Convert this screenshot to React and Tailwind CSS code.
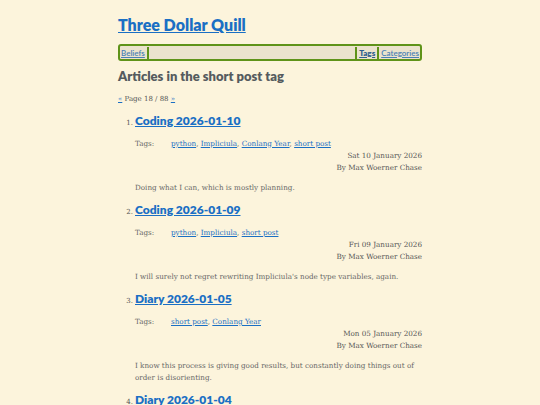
const sans = { fontFamily: 'Lato, "Noto Sans", sans-serif' }
const serif = { fontFamily: '"DejaVu Serif", "Liberation Serif", serif' }

const posts = [
  {
    title: "Coding 2026-01-10",
    tags: ["python", "Impliciula", "Conlang Year", "short post"],
    date: "Sat 10 January 2026",
    summary: "Doing what I can, which is mostly planning.",
  },
  {
    title: "Coding 2026-01-09",
    tags: ["python", "Impliciula", "short post"],
    date: "Fri 09 January 2026",
    summary: "I will surely not regret rewriting Impliciula's node type variables, again.",
  },
  {
    title: "Diary 2026-01-05",
    tags: ["short post", "Conlang Year"],
    date: "Mon 05 January 2026",
    summary: "I know this process is giving good results, but constantly doing things out of order is disorienting.",
  },
  {
    title: "Diary 2026-01-04",
    tags: ["short post"],
    date: "Sun 04 January 2026",
    summary: "",
  },
]

const Sep = () => <span className="mx-[2px] inline-block h-[12px] w-[2px] bg-[#5f9319]" />

const PostItem = ({ post, idx }) => (
  <li className="flex">
    <span className="w-[17px] shrink-0 pt-[6px] text-right pr-[2px] text-[7px] text-[#555]" style={serif}>{idx + 1}.</span>
    <div className="flex-1">
      <a href="#" className="block text-[12px] leading-[18px] font-extrabold text-[#1a6fc4] underline" style={sans}>{post.title}</a>
      <div className="mt-[8px] flex text-[7.2px] leading-[12px] text-[#666]" style={serif}>
        <span className="w-[36px]">Tags:</span>
        <span>
          {post.tags.map((t, i) => (
            <span key={i}>
              <a href="#" className="text-[#1a6fc4] underline">{t}</a>
              {i < post.tags.length - 1 && ", "}
            </span>
          ))}
        </span>
      </div>
      <div className="text-right text-[7.2px] leading-[12px] text-[#555]" style={serif}>
        <div>{post.date}</div>
        <div>By Max Woerner Chase</div>
      </div>
      <p className="mt-[8px] mb-[7px] text-[7.2px] leading-[12px] text-[#666]" style={serif}>{post.summary}</p>
    </div>
  </li>
)

export default function App() {
  return (
    <div className="min-h-[405px] bg-[#fcf4dc]">
      <div className="mx-auto w-[304px] pt-[14px]">
        <a href="#" className="block text-[16px] leading-[22px] font-extrabold text-[#1a6fc4] underline" style={sans}>Three Dollar Quill</a>
        <nav className="mt-[8px] flex h-[17px] items-center rounded-[3px] border-2 border-[#5f9319] bg-[#ebe3cd] px-[1px] text-[8px] font-semibold" style={sans}>
          <a href="#" className="text-[#4a7fb5] underline">Beliefs</a>
          <Sep />
          <span className="flex-1" />
          <Sep />
          <a href="#" className="font-extrabold text-[#2f5f8f] underline">Tags</a>
          <Sep />
          <a href="#" className="text-[#4a7fb5] underline">Categories</a>
        </nav>
        <h2 className="mt-[6px] text-[13px] leading-[18px] font-extrabold text-[#555b5e]" style={sans}>Articles in the short post tag</h2>
        <div className="mt-[9px] text-[7px] text-[#555]" style={serif}>
          <a href="#" className="text-[#1a6fc4] underline">«</a> Page 18 / 88 <a href="#" className="text-[#1a6fc4] underline">»</a>
        </div>
        <ol className="mt-[7px]">
          {posts.map((p, i) => <PostItem key={i} post={p} idx={i} />)}
        </ol>
      </div>
    </div>
  )
}
